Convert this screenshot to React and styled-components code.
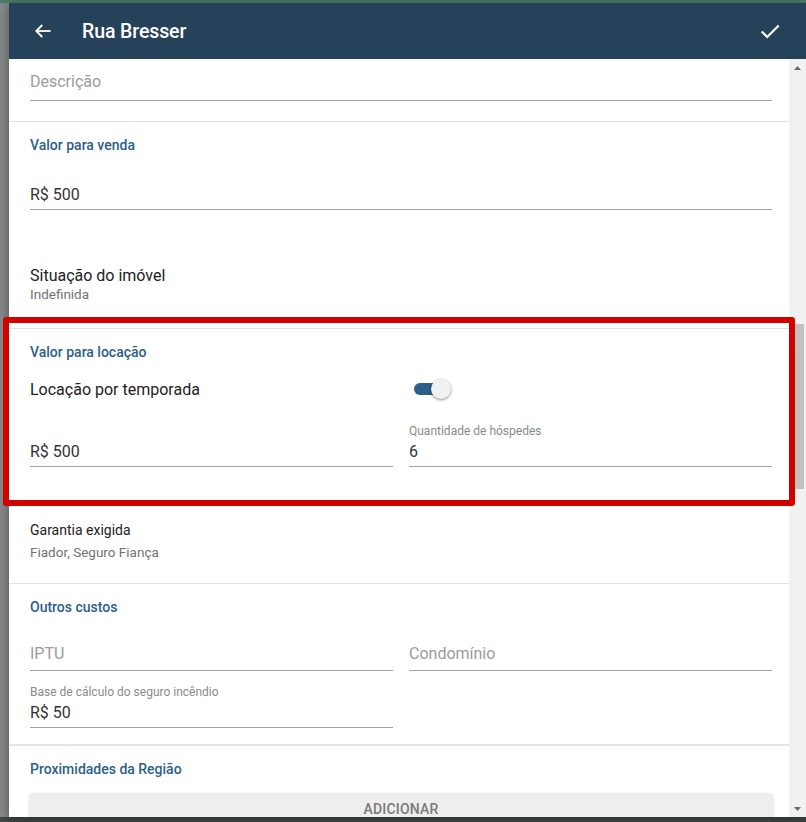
import React from "react";
import styled, { createGlobalStyle } from "styled-components";

const GlobalStyle = createGlobalStyle`
  html, body {
    margin: 0;
    padding: 0;
    background: #7b7f80;
    font-family: Roboto, "Liberation Sans", Arial, sans-serif;
  }
`;

const Backdrop = styled.div`
  width: 806px;
  height: 822px;
  padding: 3px 0 5px 9px;
  box-sizing: border-box;
  background: linear-gradient(to bottom, #4f7b6a 0, #4f7b6a 3px, #858889 3px, #858889 817px, #3f4a44 817px);
  overflow: hidden;
`;

const Modal = styled.div`
  position: relative;
  width: 797px;
  height: 814px;
  display: flex;
  flex-direction: column;
  background: #fff;
  box-shadow: 0 2px 10px rgba(0, 0, 0, 0.4);
`;

const Header = styled.header`
  height: 56px;
  flex: none;
  display: flex;
  align-items: center;
  padding: 0 24px 0 22px;
  background: #26415a;
  color: #fff;
`;

const Title = styled.h1`
  flex: 1;
  margin: 0 0 0 27px;
  font-size: 19.5px;
  font-weight: 500;
  letter-spacing: -0.1px;
`;

const IconButton = styled.span`
  display: flex;
  width: 24px;
  height: 24px;
  align-items: center;
  justify-content: center;
`;

const Body = styled.div`
  flex: 1;
  display: flex;
  min-height: 0;
`;

const Content = styled.div`
  flex: 1;
  overflow: hidden;
`;

const Section = styled.section`
  padding: 0 17px 0 21px;
  padding-bottom: ${(p) => p.$bottom || 0}px;
`;

const Divider = styled.div`
  height: ${(p) => p.$thick || 1}px;
  background: ${(p) => (p.$thick ? "#e6e6e6" : "#e2e2e2")};
`;

const SectionTitle = styled.h2`
  margin: 13px 0 0;
  font-size: 14px;
  line-height: 20px;
  font-weight: 500;
  color: #2c5f89;
`;

const Field = styled.div`
  margin-top: ${(p) => p.$top || 0}px;
  display: flex;
  flex-direction: column;
`;

const FieldLabel = styled.div`
  font-size: 12px;
  line-height: 16px;
  color: #8a8a8a;
  height: 16px;
  margin-bottom: 3px;
`;

const FieldInput = styled.div`
  font-size: 16px;
  line-height: 20px;
  color: ${(p) => (p.$placeholder ? "#9b9b9b" : "#333")};
  padding-bottom: ${(p) => p.$pad ?? (p.$placeholder ? 8 : 4)}px;
  border-bottom: 1px solid #a3a3a3;
`;

const Columns = styled.div`
  margin-top: ${(p) => p.$top || 0}px;
  display: grid;
  grid-template-columns: 1fr 1fr;
  column-gap: 16px;
`;

const InfoTitle = styled.div`
  margin-top: ${(p) => p.$top || 0}px;
  font-size: ${(p) => p.$size || 16}px;
  line-height: 20px;
  color: #222;
`;

const InfoValue = styled.div`
  margin-top: ${(p) => p.$top || 0}px;
  font-size: 13.5px;
  line-height: 16px;
  color: #737373;
`;

const ToggleRow = styled.div`
  margin-top: 15px;
  display: grid;
  grid-template-columns: 1fr 1fr;
  column-gap: 16px;
  align-items: center;
  height: 24px;
  font-size: 16px;
  color: #222;
`;

const Track = styled.span`
  position: relative;
  display: block;
  margin-left: 5px;
  width: 34px;
  height: 12px;
  border-radius: 6px;
  background: #2a5f8b;
`;

const Thumb = styled.span`
  position: absolute;
  top: -4px;
  right: -3px;
  width: 20px;
  height: 20px;
  border-radius: 50%;
  background: #f1f1f1;
  box-shadow: 0 1px 3px rgba(0, 0, 0, 0.45);
`;

const AddButton = styled.div`
  margin: 14px -1px 0 -1px;
  height: 40px;
  border-radius: 4px;
  background: #eeeeee;
  box-shadow: 0 1px 3px rgba(0, 0, 0, 0.15);
  display: flex;
  justify-content: center;
  padding-top: 8px;
  box-sizing: border-box;
  font-size: 14px;
  line-height: 16px;
  font-weight: 500;
  color: #7a7a7a;
  letter-spacing: 0.2px;
`;

const ScrollTrack = styled.div`
  width: 17px;
  flex: none;
  display: flex;
  flex-direction: column;
  background: #f1f1f1;
`;

const ScrollArrow = styled.div`
  height: 17px;
  display: flex;
  align-items: center;
  justify-content: center;
`;

const ScrollThumb = styled.div`
  margin: 248px 0 0 6px;
  width: 9px;
  height: 165px;
  background: #c1c1c1;
`;

const Spacer = styled.div`
  flex: 1;
`;

const Highlight = styled.div`
  position: absolute;
  left: -6px;
  top: 314px;
  width: 792px;
  height: 189px;
  box-sizing: border-box;
  border: 6px solid #d30000;
  border-radius: 3px;
  pointer-events: none;
`;

const App = () => {
  return (
    <>
      <GlobalStyle />
      <Backdrop>
        <Modal>
          <Header>
            <IconButton>
              <svg width="18" height="18" viewBox="0 0 24 24" fill="none" stroke="#fff" strokeWidth="2.4" strokeLinecap="square">
                <path d="M21 12H4" />
                <path d="M11 4l-8 8 8 8" strokeLinecap="butt" />
              </svg>
            </IconButton>
            <Title>Rua Bresser</Title>
            <IconButton>
              <svg width="22" height="22" viewBox="0 0 24 24" fill="none" stroke="#fff" strokeWidth="2.4">
                <path d="M3 12.5l6 6L21.5 6" />
              </svg>
            </IconButton>
          </Header>
          <Body>
            <Content>
              <Section $bottom={20}>
                <Field $top={13}>
                  <FieldInput $placeholder>Descrição</FieldInput>
                </Field>
              </Section>
              <Divider />
              <Section $bottom={26}>
                <SectionTitle>Valor para venda</SectionTitle>
                <Field $top={30}>
                  <FieldInput>R$ 500</FieldInput>
                </Field>
                <InfoTitle $top={56}>Situação do imóvel</InfoTitle>
                <InfoValue>Indefinida</InfoValue>
              </Section>
              <Divider />
              <Section $bottom={34}>
                <SectionTitle>Valor para locação</SectionTitle>
                <ToggleRow>
                  <span>Locação por temporada</span>
                  <Track>
                    <Thumb />
                  </Track>
                </ToggleRow>
                <Columns $top={22}>
                  <Field>
                    <FieldLabel />
                    <FieldInput>R$ 500</FieldInput>
                  </Field>
                  <Field>
                    <FieldLabel>Quantidade de hóspedes</FieldLabel>
                    <FieldInput>6</FieldInput>
                  </Field>
                </Columns>
              </Section>
              <Divider />
              <Section $bottom={23}>
                <InfoTitle $top={18} $size={14}>Garantia exigida</InfoTitle>
                <InfoValue $top={4}>Fiador, Seguro Fiança</InfoValue>
              </Section>
              <Divider />
              <Section $bottom={16}>
                <SectionTitle>Outros custos</SectionTitle>
                <Columns $top={27}>
                  <Field>
                    <FieldInput $placeholder $pad={6}>IPTU</FieldInput>
                  </Field>
                  <Field>
                    <FieldInput $placeholder $pad={6}>Condomínio</FieldInput>
                  </Field>
                </Columns>
                <Columns $top={13}>
                  <Field>
                    <FieldLabel>Base de cálculo do seguro incêndio</FieldLabel>
                    <FieldInput>R$ 50</FieldInput>
                  </Field>
                </Columns>
              </Section>
              <Divider $thick={2} />
              <Section>
                <SectionTitle>Proximidades da Região</SectionTitle>
                <AddButton>ADICIONAR</AddButton>
              </Section>
            </Content>
            <ScrollTrack>
              <ScrollArrow>
                <svg width="7" height="4" viewBox="0 0 7 4"><path d="M0 4L3.5 0 7 4z" fill="#6a6a6a" /></svg>
              </ScrollArrow>
              <ScrollThumb />
              <Spacer />
              <ScrollArrow>
                <svg width="7" height="4" viewBox="0 0 7 4"><path d="M0 0L3.5 4 7 0z" fill="#6a6a6a" /></svg>
              </ScrollArrow>
            </ScrollTrack>
          </Body>
          <Highlight />
        </Modal>
      </Backdrop>
    </>
  );
};

export default App;
